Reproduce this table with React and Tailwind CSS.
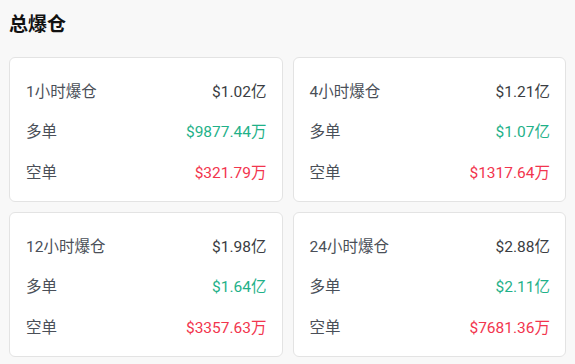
import React from "react";

const cards = [
  { title: "1小时爆仓", total: "$1.02亿", long: "$9877.44万", short: "$321.79万" },
  { title: "4小时爆仓", total: "$1.21亿", long: "$1.07亿", short: "$1317.64万" },
  { title: "12小时爆仓", total: "$1.98亿", long: "$1.64亿", short: "$3357.63万" },
  { title: "24小时爆仓", total: "$2.88亿", long: "$2.11亿", short: "$7681.36万" },
];

function Row({ label, value, valueClass }) {
  return (
    <div className="flex h-[40.5px] items-center justify-between">
      <span className="text-[#4a4f58]">{label}</span>
      <span className={valueClass}>{value}</span>
    </div>
  );
}

function Card({ card }) {
  return (
    <div className="h-[145px] rounded-md border border-[#e3e3e3] bg-white pl-[16px] pr-[15px] pt-[14px]">
      <Row label={card.title} value={card.total} valueClass="text-[#3a3d42]" />
      <Row label="多单" value={card.long} valueClass="text-[#1fb189]" />
      <Row label="空单" value={card.short} valueClass="text-[#f2354e]" />
    </div>
  );
}

export default function App() {
  return (
    <div
      className="h-[364px] w-[575px] bg-[#f8f8f8] px-[9px] pt-[12px] text-[15.5px]"
      style={{ fontFamily: "Roboto, 'Noto Sans CJK SC', sans-serif" }}
    >
      <h1 className="mb-[19px] text-[19px] font-bold leading-[26px] text-[#111]">总爆仓</h1>
      <div className="grid grid-cols-2 gap-[10px]">
        {cards.map((c) => (
          <Card key={c.title} card={c} />
        ))}
      </div>
    </div>
  );
}
